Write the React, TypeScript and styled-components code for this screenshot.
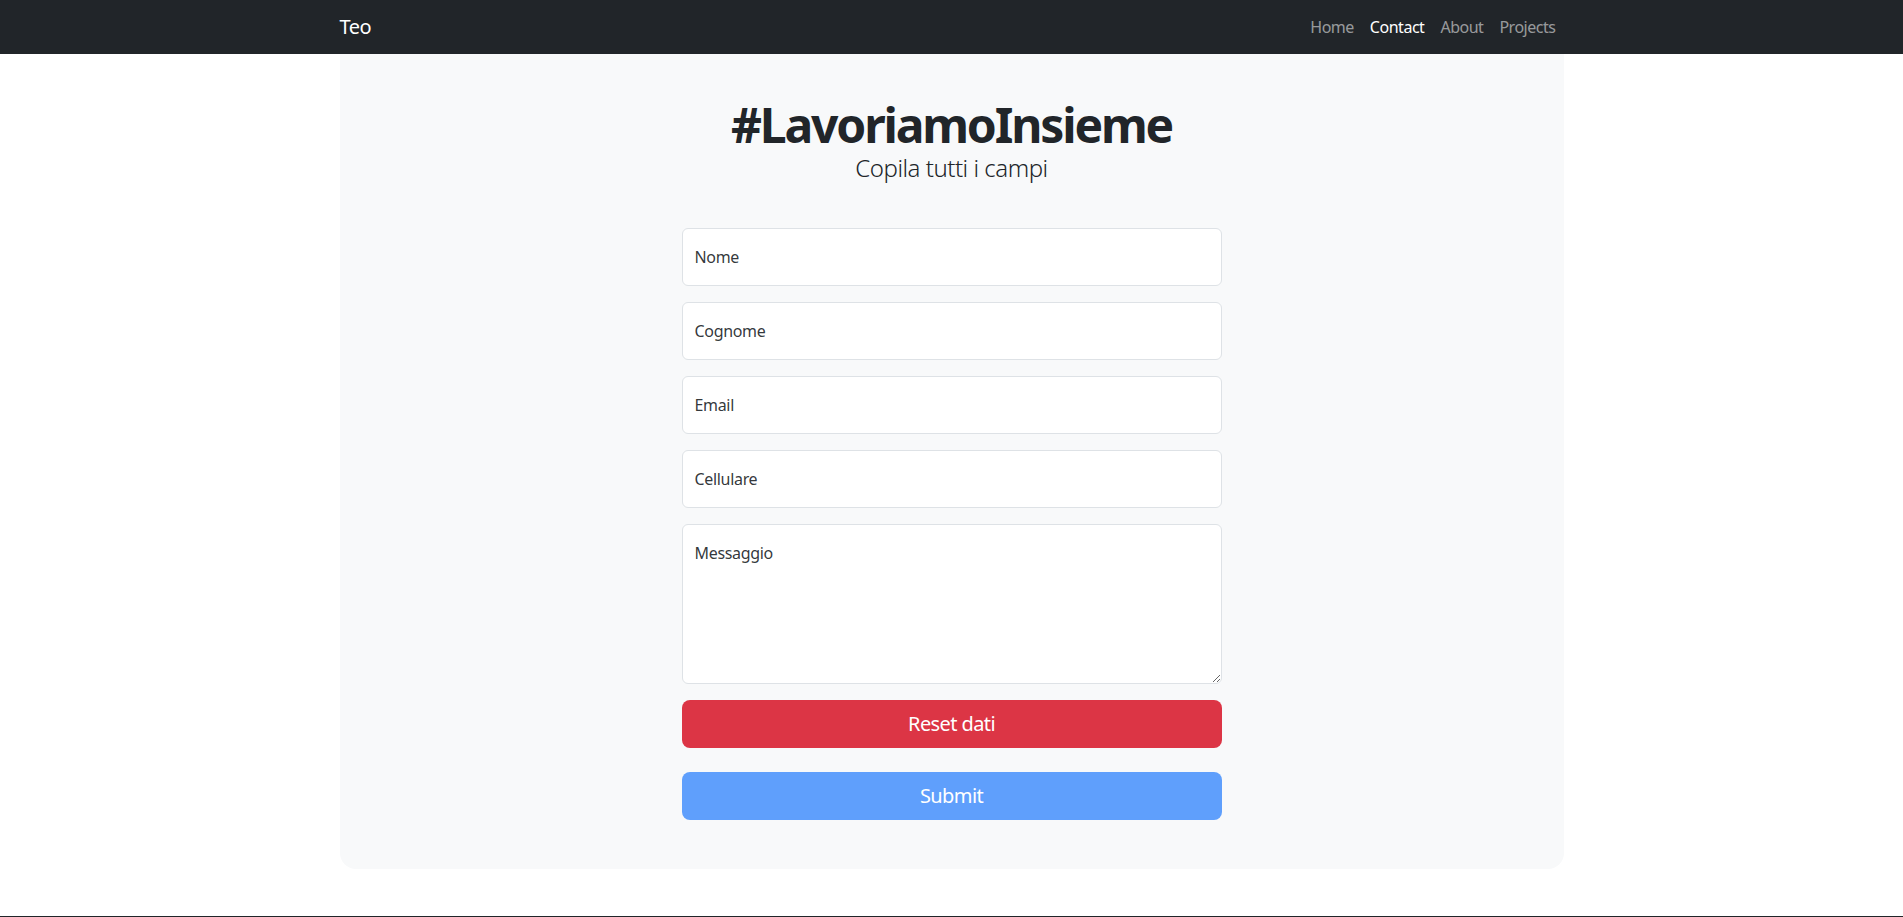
import React from "react";
import styled, { createGlobalStyle } from "styled-components";

const GlobalStyle = createGlobalStyle`
  *, *::before, *::after { box-sizing: border-box; }
  html, body { margin: 0; padding: 0; }
  body {
    font-family: "Noto Sans", "Open Sans", Arial, sans-serif;
    color: #212529;
    background: #ffffff;
    letter-spacing: -0.03em;
    -webkit-font-smoothing: antialiased;
  }
`;

const NavBar = styled.nav`
  background: #212529;
  height: 54px;
`;

const NavInner = styled.div`
  width: 1224px;
  height: 100%;
  margin: 0 auto;
  display: flex;
  align-items: center;
  justify-content: space-between;
`;

const Brand = styled.a`
  color: #ffffff;
  font-size: 20px;
  line-height: 30px;
  text-decoration: none;
`;

const NavList = styled.div`
  display: flex;
  align-items: center;
`;

const NavLink = styled.a<{ $active?: boolean }>`
  padding: 0 8px;
  font-size: 16px;
  line-height: 24px;
  text-decoration: none;
  color: ${(p) => (p.$active ? "#ffffff" : "rgba(255, 255, 255, 0.55)")};
`;

const Panel = styled.main`
  width: 1224px;
  margin: 0 auto 47px;
  background: #f8f9fa;
  border-radius: 0 0 16px 16px;
  padding: 42px 48px 49px;
  display: flex;
  flex-direction: column;
  align-items: center;
`;

const Title = styled.h1`
  margin: 0;
  font-size: 48px;
  font-weight: 700;
  line-height: 1.2;
  letter-spacing: -0.045em;
  text-align: center;
`;

const Subtitle = styled.p`
  margin: 0;
  font-size: 24px;
  font-weight: 300;
  line-height: 1.2;
  text-align: center;
`;

const Form = styled.form`
  width: 540px;
  margin-top: 46px;
  display: flex;
  flex-direction: column;
`;

const fieldBase = `
  width: 100%;
  border: 1px solid #dee2e6;
  border-radius: 6px;
  background: #ffffff;
  font-family: inherit;
  font-size: 16px;
  line-height: 24px;
  letter-spacing: -0.02em;
  color: #212529;
  padding: 16px 12px;
  outline: none;
  &::placeholder { color: rgba(33, 37, 41, 0.92); opacity: 1; }
`;

const Input = styled.input`
  ${fieldBase}
  height: 58px;
  margin-bottom: 16px;
`;

const TextArea = styled.textarea`
  ${fieldBase}
  height: 160px;
  resize: vertical;
  display: block;
  margin-bottom: 16px;
`;

const Button = styled.button<{ $variant: "danger" | "primary" }>`
  width: 100%;
  height: 48px;
  border: none;
  border-radius: 8px;
  font-family: inherit;
  font-size: 20px;
  line-height: 30px;
  letter-spacing: -0.03em;
  color: #ffffff;
  background: ${(p) => (p.$variant === "danger" ? "#dc3545" : "#5f9ffc")};
  cursor: ${(p) => (p.$variant === "danger" ? "pointer" : "default")};
  & + & { margin-top: 24px; }
`;

const Footer = styled.footer`
  background: #212529;
  height: 120px;
`;

export default function App() {
  return (
    <>
      <GlobalStyle />
      <NavBar>
        <NavInner>
          <Brand href="#">Teo</Brand>
          <NavList>
            <NavLink href="#">Home</NavLink>
            <NavLink href="#" $active>Contact</NavLink>
            <NavLink href="#">About</NavLink>
            <NavLink href="#">Projects</NavLink>
          </NavList>
        </NavInner>
      </NavBar>
      <Panel>
        <Title>#LavoriamoInsieme</Title>
        <Subtitle>Copila tutti i campi</Subtitle>
        <Form onSubmit={(e) => e.preventDefault()}>
          <Input type="text" placeholder="Nome" />
          <Input type="text" placeholder="Cognome" />
          <Input type="email" placeholder="Email" />
          <Input type="tel" placeholder="Cellulare" />
          <TextArea placeholder="Messaggio" />
          <Button type="reset" $variant="danger">Reset dati</Button>
          <Button type="submit" $variant="primary" disabled>Submit</Button>
        </Form>
      </Panel>
      <Footer />
    </>
  );
}
